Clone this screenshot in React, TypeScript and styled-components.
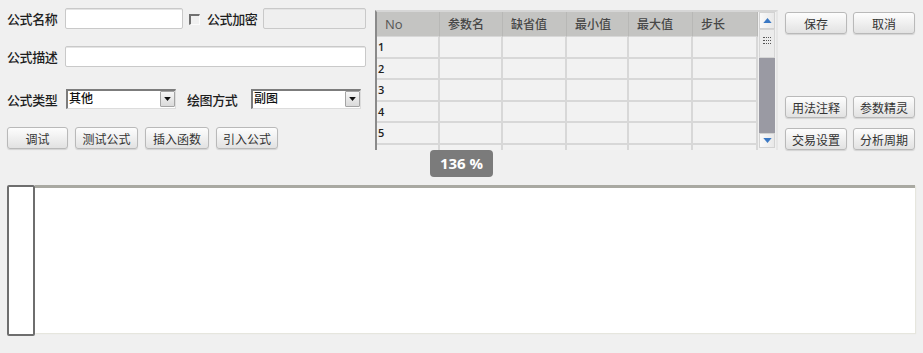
import React from "react";
import styled, { createGlobalStyle } from "styled-components";

const GlobalStyle = createGlobalStyle`
  html, body {
    margin: 0;
    padding: 0;
    background: #f0f0f0;
  }
  body {
    font-family: "Noto Sans CJK SC", "Noto Sans", sans-serif;
    color: #222;
  }
  * {
    box-sizing: border-box;
  }
`;

const Page = styled.div`
  position: relative;
  width: 923px;
  height: 353px;
  padding-top: 8px;
  overflow: hidden;
`;

const Top = styled.div`
  display: flex;
  align-items: flex-start;
  height: 142px;
`;

const Form = styled.div`
  display: flex;
  flex-direction: column;
  width: 359px;
  margin-left: 7px;
`;

const Row = styled.div<{ $top?: number; $h?: number }>`
  display: flex;
  align-items: center;
  margin-top: ${(p) => p.$top ?? 0}px;
  height: ${(p) => p.$h ?? 21}px;
`;

const Label = styled.span<{ $w: number; $ml?: number }>`
  width: ${(p) => p.$w}px;
  margin-left: ${(p) => p.$ml ?? 0}px;
  font-size: 13px;
  font-weight: 500;
  color: #1e1e1e;
  white-space: nowrap;
  letter-spacing: -0.4px;
`;

const TextInput = styled.div<{ $w: number; $disabled?: boolean }>`
  width: ${(p) => p.$w}px;
  height: 21px;
  background: ${(p) => (p.$disabled ? "#efefef" : "#fff")};
  border: 1px solid #c9c9c9;
  border-radius: 2px;
  box-shadow: inset 0 1px 0 #e4e4e4;
`;

const Check = styled.span`
  width: 11px;
  height: 11px;
  margin-left: 6px;
  margin-top: 1px;
  border-top: 2px solid #707070;
  border-left: 2px solid #707070;
  border-right: 1px solid #fbfbfb;
  border-bottom: 1px solid #fbfbfb;
`;

const SelectBox = styled.div<{ $w: number }>`
  display: flex;
  align-items: flex-start;
  justify-content: space-between;
  width: ${(p) => p.$w}px;
  height: 20px;
  background: #fff;
  border-style: solid;
  border-width: 2px 1px 1px 2px;
  border-color: #7c7c7c #dcdcdc #dcdcdc #7c7c7c;
  padding: 0 0 1px 1px;
`;

const SelectText = styled.span`
  font-size: 12px;
  font-weight: 500;
  line-height: 13px;
  color: #111;
`;

const DropButton = styled.span`
  display: flex;
  align-items: center;
  justify-content: center;
  width: 15px;
  height: 16px;
  background: linear-gradient(#f6f6f6, #dadada);
  border: 1px solid #a4a4a4;
  border-radius: 1px;
`;

const Btn = styled.button<{ $w?: number }>`
  width: ${(p) => p.$w ?? 62}px;
  height: 22px;
  padding: 0;
  font-family: inherit;
  font-size: 12px;
  color: #333;
  background: linear-gradient(#fdfdfd, #e2e2e2);
  border: 1px solid #b9b9b9;
  border-radius: 3px;
  box-shadow: 0 1px 1px rgba(0, 0, 0, 0.12);
  cursor: default;
`;

const ButtonRow = styled.div<{ $top?: number; $gap?: number }>`
  display: flex;
  gap: ${(p) => p.$gap ?? 7}px;
  margin-top: ${(p) => p.$top ?? 0}px;
`;

const Grid = styled.div`
  display: flex;
  width: 403px;
  height: 140px;
  margin-top: 2px;
  margin-left: 9px;
  border-left: 2px solid #8a8a8a;
  border-top: 2px solid #d6d6d6;
  border-right: 2px solid #e6e6e6;
  overflow: hidden;
`;

const GridBody = styled.div`
  width: 381px;
  display: flex;
  flex-direction: column;
`;

const GridRow = styled.div<{ $head?: boolean }>`
  display: grid;
  grid-template-columns: 63px 63px 64px 62px 64px 65px;
  flex: none;
  height: ${(p) => (p.$head ? "25px" : "21.6px")};
  background: ${(p) => (p.$head ? "#c4c4c2" : "#f2f2f2")};
`;

const HeadCell = styled.div`
  padding-left: 8px;
  font-size: 12px;
  font-weight: 500;
  line-height: 24px;
  color: #474747;
  border-right: 1px solid #b8b8b6;
  border-bottom: 1px solid #d8d8d8;
  &:first-child {
    font-family: "Open Sans", sans-serif;
    font-size: 13px;
    color: #555;
  }
`;

const Cell = styled.div`
  padding-left: 1px;
  font-family: "Open Sans", sans-serif;
  font-size: 11px;
  font-weight: 600;
  line-height: 19px;
  color: #222;
  border-right: 2px solid #d8d8d8;
  border-bottom: 2px solid #d8d8d8;
`;

const Scrollbar = styled.div`
  display: flex;
  flex-direction: column;
  width: 18px;
  padding: 0 1px 2px 1px;
  background: #f0f0f0;
`;

const ScrollBtn = styled.div<{ $h: number }>`
  display: flex;
  align-items: center;
  justify-content: center;
  height: ${(p) => p.$h}px;
  background: linear-gradient(90deg, #fafafa, #e8e8e8);
  border: 1px solid #d2d2d2;
`;

const Thumb = styled.div`
  display: flex;
  flex-direction: column;
  align-items: center;
  justify-content: center;
  gap: 2px;
  height: 29px;
  padding-bottom: 6px;
  background: #ececec;
  border: 1px solid #d6d6d6;
`;

const Grip = styled.span`
  width: 8px;
  height: 1px;
  border-top: 1px dotted #555;
`;

const Track = styled.div`
  flex: 1;
  background: #9a9aa3;
`;

const Side = styled.div`
  display: flex;
  flex-direction: column;
  margin-left: 7px;
  margin-top: 4px;
`;

const Badge = styled.div`
  position: absolute;
  left: 430px;
  top: 150px;
  width: 63px;
  height: 27px;
  background: #7b7b7b;
  border-radius: 4px;
  color: #fff;
  font-family: "Open Sans", sans-serif;
  font-weight: 700;
  font-size: 15px;
  line-height: 27px;
  text-align: center;
`;

const Bottom = styled.div`
  display: flex;
  align-items: flex-start;
  margin: 35px 7px 0 7px;
`;

const SideBox = styled.div`
  width: 28px;
  height: 151px;
  background: #fff;
  border: 2px solid #6e6e6e;
  border-radius: 2px;
`;

const Canvas = styled.div`
  flex: 1;
  height: 148px;
  margin-right: 1px;
  background: #fff;
  border-top: 3px solid #a9a9a2;
  box-shadow: 1px 1px 1px #e6e6de;
`;

const Arrow: React.FC<{ down?: boolean; color?: string; w?: number }> = ({
  down,
  color = "#3a78c4",
  w = 9,
}) => (
  <svg width={w} height={Math.round(w * 0.6)} viewBox="0 0 10 6">
    <path d={down ? "M0 0 H10 L5 6 Z" : "M0 6 H10 L5 0 Z"} fill={color} />
  </svg>
);

const Select: React.FC<{ value: string; w: number }> = ({ value, w }) => (
  <SelectBox $w={w}>
    <SelectText>{value}</SelectText>
    <DropButton>
      <Arrow down color="#111" w={7} />
    </DropButton>
  </SelectBox>
);

const columns = ["No", "参数名", "缺省值", "最小值", "最大值", "步长"];
const rows = ["1", "2", "3", "4", "5", ""];

export default function App() {
  return (
    <>
      <GlobalStyle />
      <Page>
        <Top>
          <Form>
            <Row>
              <Label $w={58}>公式名称</Label>
              <TextInput $w={118} />
              <Check />
              <Label $w={56} $ml={7}>
                公式加密
              </Label>
              <TextInput $w={103} $disabled />
            </Row>
            <Row $top={17}>
              <Label $w={58}>公式描述</Label>
              <TextInput $w={301} />
            </Row>
            <Row $top={22} $h={20}>
              <Label $w={59}>公式类型</Label>
              <Select value="其他" w={110} />
              <Label $w={64} $ml={11}>
                绘图方式
              </Label>
              <Select value="副图" w={110} />
            </Row>
            <ButtonRow $top={18}>
              <Btn $w={61}>调试</Btn>
              <Btn $w={63}>测试公式</Btn>
              <Btn $w={64}>插入函数</Btn>
              <Btn $w={62}>引入公式</Btn>
            </ButtonRow>
          </Form>

          <Grid>
            <GridBody>
              <GridRow $head>
                {columns.map((c) => (
                  <HeadCell key={c}>{c}</HeadCell>
                ))}
              </GridRow>
              {rows.map((r, i) => (
                <GridRow key={i}>
                  {columns.map((c, j) => (
                    <Cell key={c}>{j === 0 ? r : ""}</Cell>
                  ))}
                </GridRow>
              ))}
            </GridBody>
            <Scrollbar>
              <ScrollBtn $h={17}>
                <Arrow />
              </ScrollBtn>
              <Thumb>
                <Grip />
                <Grip />
                <Grip />
              </Thumb>
              <Track />
              <ScrollBtn $h={15}>
                <Arrow down />
              </ScrollBtn>
            </Scrollbar>
          </Grid>

          <Side>
            <ButtonRow $gap={6}>
              <Btn>保存</Btn>
              <Btn>取消</Btn>
            </ButtonRow>
            <ButtonRow $gap={6} $top={62}>
              <Btn>用法注释</Btn>
              <Btn>参数精灵</Btn>
            </ButtonRow>
            <ButtonRow $gap={6} $top={10}>
              <Btn>交易设置</Btn>
              <Btn>分析周期</Btn>
            </ButtonRow>
          </Side>
        </Top>

        <Badge>136 %</Badge>

        <Bottom>
          <SideBox />
          <Canvas />
        </Bottom>
      </Page>
    </>
  );
}
